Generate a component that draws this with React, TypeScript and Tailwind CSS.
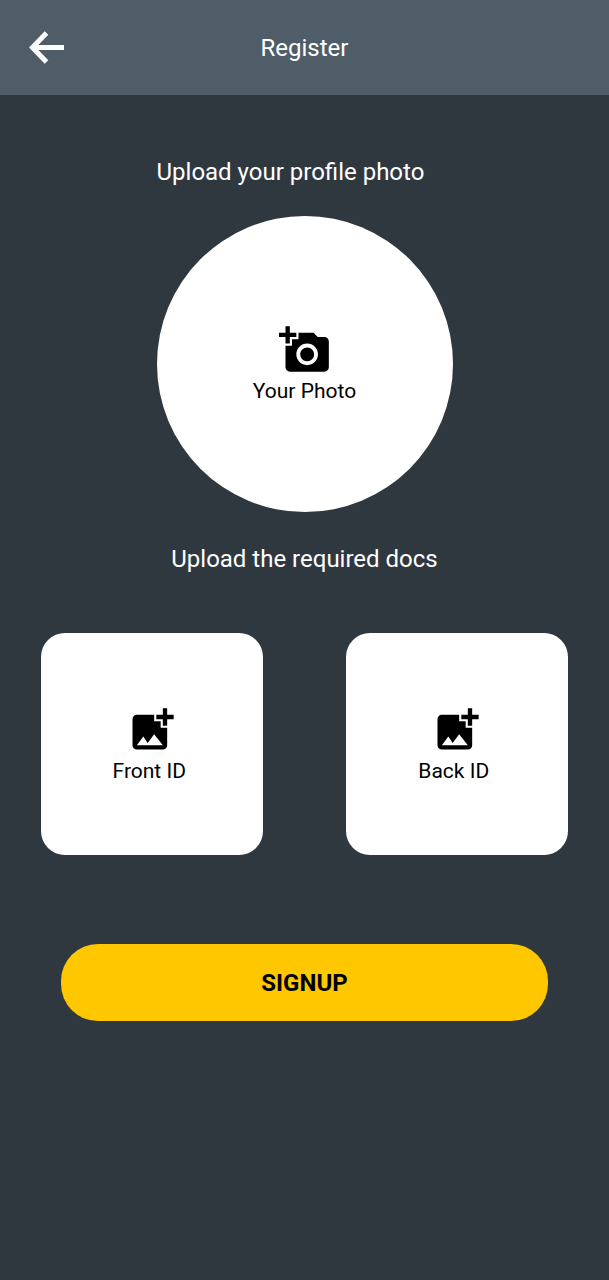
import type { ReactNode } from 'react';

function BackArrow() {
  return (
    <svg viewBox="0 0 36 34" className="h-[34px] w-9" fill="none" stroke="currentColor" strokeWidth="5" aria-hidden="true">
      <path d="M18.5 2 4.5 16.5l14 14.5" />
      <path d="M4.5 16.5h31.5" />
    </svg>
  );
}

function CameraPlus() {
  return (
    <svg viewBox="0 0 24 24" className="size-[52px]" fill="currentColor" aria-hidden="true">
      <path d="M3 4V1h2v3h3v2H5v3H3V6H0V4h3zm3 6V7h3V4h7l1.83 2H21c1.1 0 2 .9 2 2v12c0 1.1-.9 2-2 2H5c-1.1 0-2-.9-2-2V10h3zm7 9c2.76 0 5-2.24 5-5s-2.24-5-5-5-5 2.24-5 5 2.24 5 5 5zm-3.2-5c0 1.77 1.43 3.2 3.2 3.2s3.2-1.43 3.2-3.2-1.43-3.2-3.2-3.2-3.2 1.43-3.2 3.2z" />
    </svg>
  );
}

function PicturePlus() {
  return (
    <svg viewBox="0 0 24 24" className="size-[52px]" fill="currentColor" aria-hidden="true">
      <path d="M19 7v2.99s-1.99.01-2 0V7h-3s.01-1.99 0-2h3V2h2v3h3v2h-3zm-3 4V8h-3V5H5c-1.1 0-2 .9-2 2v12c0 1.1.9 2 2 2h12c1.1 0 2-.9 2-2v-8h-3zM5 19l3-4 2 3 3-4 4 5H5z" />
    </svg>
  );
}

function DocCard({ children }: { children: ReactNode }) {
  return (
    <button type="button" className="flex size-[222px] flex-col items-center justify-center rounded-3xl bg-white pt-0.5 text-[21px] leading-[30px] text-black">
      <PicturePlus />
      <span className="pr-1.5">{children}</span>
    </button>
  );
}

export default function App() {
  return (
    <div className="min-h-screen bg-[#30383f] font-['Roboto',sans-serif] text-2xl text-white">
      <header className="grid h-[95px] grid-cols-[1fr_auto_1fr] items-center bg-[#4f5d68] px-7">
        <button type="button" aria-label="Back" className="justify-self-start">
          <BackArrow />
        </button>
        <h1>Register</h1>
      </header>
      <main className="flex flex-col items-center pt-[61px]">
        <section className="flex flex-col gap-7">
          <h2>Upload your profile photo</h2>
          <button type="button" className="flex size-[296px] flex-col items-center justify-center rounded-full bg-white pt-0.5 text-[21px] leading-[30px] text-black">
            <CameraPlus />
            Your Photo
          </button>
        </section>
        <h2 className="mt-[31px]">Upload the required docs</h2>
        <section className="mt-[58px] flex w-full justify-around">
          <DocCard>Front ID</DocCard>
          <DocCard>Back ID</DocCard>
        </section>
        <button type="button" className="mt-[89px] h-[77px] w-4/5 rounded-[37px] bg-[#ffc700] font-bold text-black">
          SIGNUP
        </button>
      </main>
    </div>
  );
}
